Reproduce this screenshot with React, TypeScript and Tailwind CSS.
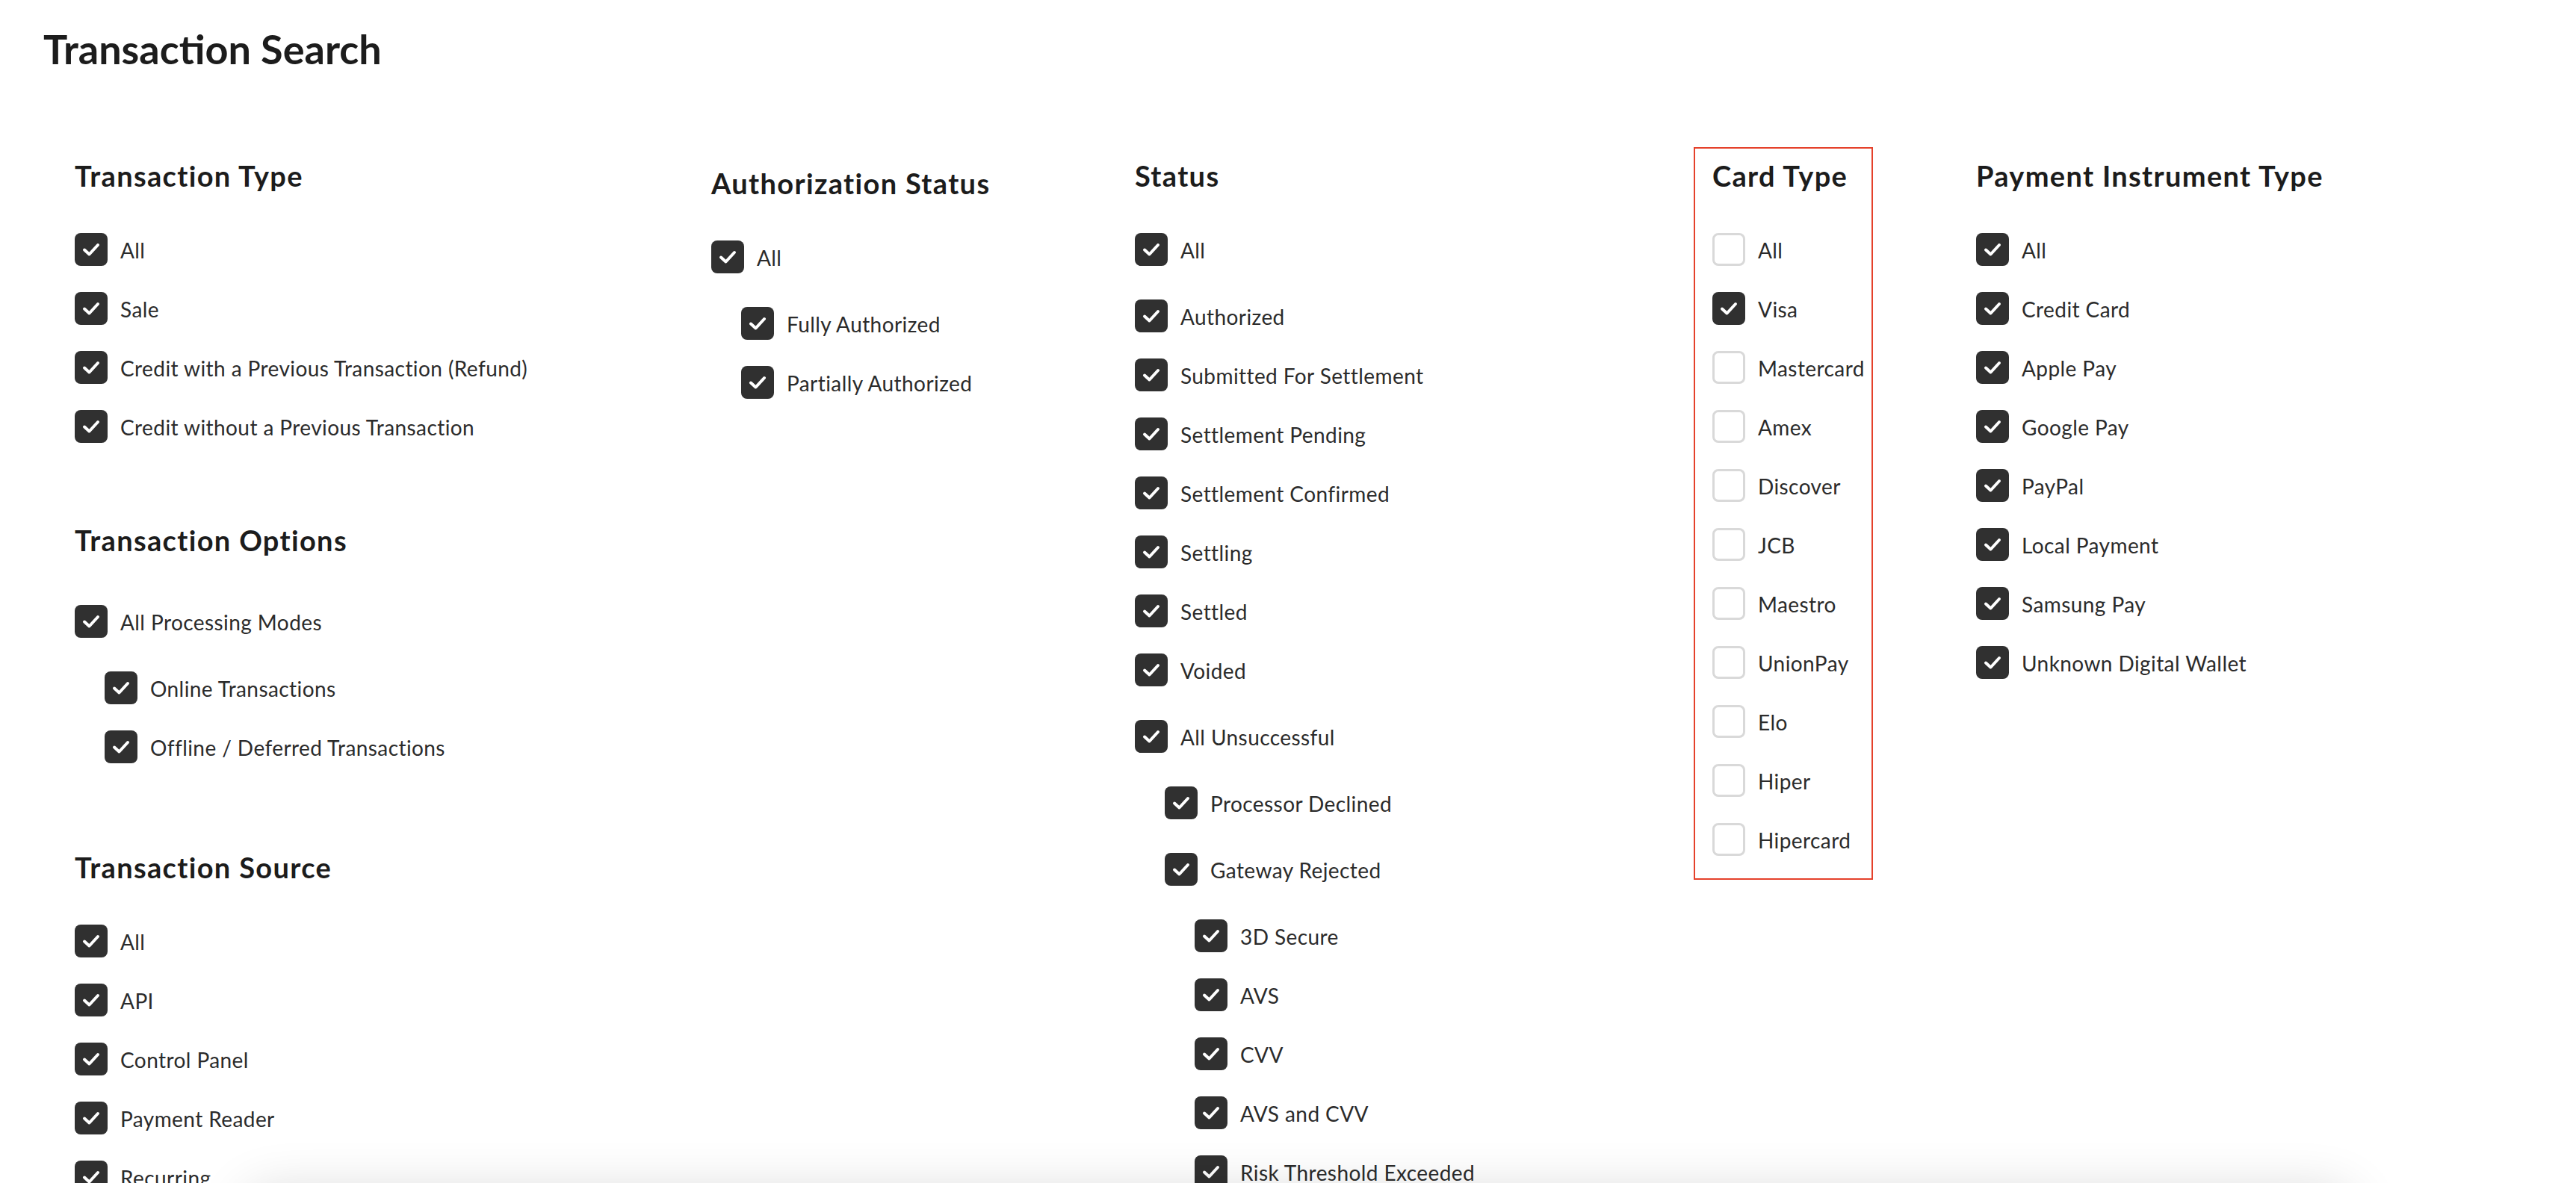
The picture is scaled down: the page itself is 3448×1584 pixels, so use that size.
import React from "react";

interface Option {
  label: string;
  checked?: boolean;
  indent?: 0 | 1 | 2;
  extra?: boolean;
}

interface SectionProps {
  title: string;
  items: Option[];
  className?: string;
  firstGap?: string;
}

const indents = ["", "ml-[40px]", "ml-[80px]"];

const CheckBox: React.FC<{ checked: boolean }> = ({ checked }) =>
  checked ? (
    <span className="flex h-[44px] w-[44px] shrink-0 items-center justify-center rounded-[8px] bg-[#303030]">
      <svg width="24" height="20" viewBox="0 0 24 20" fill="none">
        <path
          d="M3 10.5 L9.5 16.5 L21 4"
          stroke="white"
          strokeWidth="4"
          strokeLinecap="round"
          strokeLinejoin="round"
        />
      </svg>
    </span>
  ) : (
    <span className="h-[44px] w-[44px] shrink-0 rounded-[8px] border-[3px] border-[#d9d9d9] bg-white" />
  );

const Section: React.FC<SectionProps> = ({ title, items, className, firstGap = "mt-[55px]" }) => (
  <section className={className}>
    <h2 className="whitespace-nowrap text-[38px] font-bold leading-[44px] tracking-[0.035em] text-[#1c1c1c]">
      {title}
    </h2>
    {items.map((item, i) => (
      <div
        key={item.label + i}
        className={[
          "flex h-[44px] items-center gap-[17px]",
          indents[item.indent ?? 0],
          i === 0 ? firstGap : item.extra ? "mt-[45px]" : "mt-[35px]",
        ].join(" ")}
      >
        <CheckBox checked={item.checked !== false} />
        <span className="whitespace-nowrap pt-[2px] text-[28px] leading-[44px] tracking-[0.015em] text-[#2b2b2b]">
          {item.label}
        </span>
      </div>
    ))}
  </section>
);

export default function App() {
  return (
    <div className="relative h-[1584px] w-full overflow-hidden bg-white font-['Lato','Liberation_Sans',sans-serif]">
      <h1 className="pl-[58px] pt-[34px] text-[54px] font-bold leading-[64px] text-[#1c1c1c]">Transaction Search</h1>

      <div className="mt-[99px] flex items-start pl-[100px]">
        <div className="mt-[16px] w-[852px] shrink-0">
          <Section
            title="Transaction Type"
            items={[
              { label: "All" },
              { label: "Sale" },
              { label: "Credit with a Previous Transaction (Refund)" },
              { label: "Credit without a Previous Transaction" },
            ]}
          />
          <Section
            className="mt-[108px]"
            firstGap="mt-[65px]"
            title="Transaction Options"
            items={[
              { label: "All Processing Modes" },
              { label: "Online Transactions", indent: 1, extra: true },
              { label: "Offline / Deferred Transactions", indent: 1 },
            ]}
          />
          <Section
            className="mt-[117px]"
            title="Transaction Source"
            items={[
              { label: "All" },
              { label: "API" },
              { label: "Control Panel" },
              { label: "Payment Reader" },
              { label: "Recurring" },
            ]}
          />
        </div>

        <div className="mt-[26px] w-[567px] shrink-0">
          <Section
            title="Authorization Status"
            items={[
              { label: "All" },
              { label: "Fully Authorized", indent: 1, extra: true },
              { label: "Partially Authorized", indent: 1 },
            ]}
          />
        </div>

        <div className="mt-[16px] w-[748px] shrink-0">
          <Section
            title="Status"
            items={[
              { label: "All" },
              { label: "Authorized", extra: true },
              { label: "Submitted For Settlement" },
              { label: "Settlement Pending" },
              { label: "Settlement Confirmed" },
              { label: "Settling" },
              { label: "Settled" },
              { label: "Voided" },
              { label: "All Unsuccessful", extra: true },
              { label: "Processor Declined", indent: 1, extra: true },
              { label: "Gateway Rejected", indent: 1, extra: true },
              { label: "3D Secure", indent: 2, extra: true },
              { label: "AVS", indent: 2 },
              { label: "CVV", indent: 2 },
              { label: "AVS and CVV", indent: 2 },
              { label: "Risk Threshold Exceeded", indent: 2 },
            ]}
          />
        </div>

        <div className="w-[240px] shrink-0 border-2 border-[#e5412b] pb-[30px] pl-[23px] pt-[14px]">
          <Section
            title="Card Type"
            items={[
              { label: "All", checked: false },
              { label: "Visa" },
              { label: "Mastercard", checked: false },
              { label: "Amex", checked: false },
              { label: "Discover", checked: false },
              { label: "JCB", checked: false },
              { label: "Maestro", checked: false },
              { label: "UnionPay", checked: false },
              { label: "Elo", checked: false },
              { label: "Hiper", checked: false },
              { label: "Hipercard", checked: false },
            ]}
          />
        </div>

        <div className="ml-[138px] mt-[16px] shrink-0">
          <Section
            title="Payment Instrument Type"
            items={[
              { label: "All" },
              { label: "Credit Card" },
              { label: "Apple Pay" },
              { label: "Google Pay" },
              { label: "PayPal" },
              { label: "Local Payment" },
              { label: "Samsung Pay" },
              { label: "Unknown Digital Wallet" },
            ]}
          />
        </div>
      </div>

      {/* footer panel sitting just below the fold, only its shadow shows */}
      <div className="absolute left-[330px] right-[300px] top-[1596px] h-[200px] rounded-[28px] bg-white shadow-[0_0_70px_rgba(0,0,0,0.16)]" />
    </div>
  );
}
